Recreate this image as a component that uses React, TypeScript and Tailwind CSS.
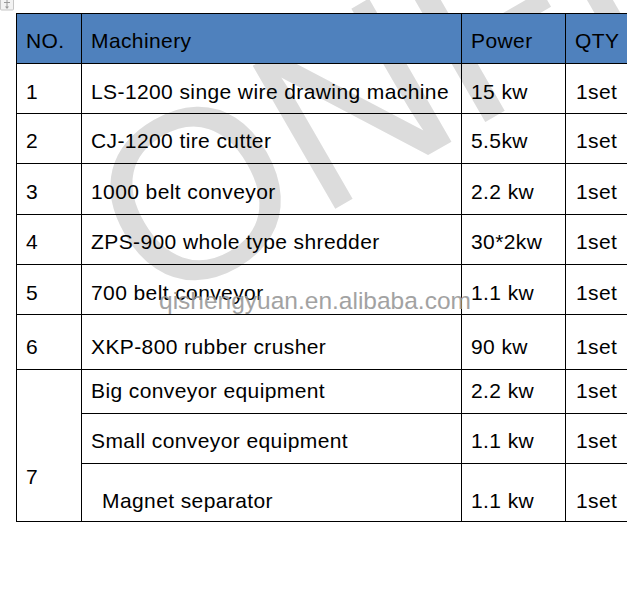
import React from "react";

type Row = {
    no: string;
    name: string;
    power: string;
    qty: string;
    h: string;
    pb: string;
};

const rows: Row[] = [
    { no: "1", name: "LS-1200 singe wire drawing machine", power: "15 kw", qty: "1set", h: "h-[50px]", pb: "pb-[9px]" },
    { no: "2", name: "CJ-1200 tire cutter", power: "5.5kw", qty: "1set", h: "h-[50px]", pb: "pb-[10px]" },
    { no: "3", name: "1000 belt conveyor", power: "2.2 kw", qty: "1set", h: "h-[51px]", pb: "pb-[10px]" },
    { no: "4", name: "ZPS-900 whole type shredder", power: "30*2kw", qty: "1set", h: "h-[50px]", pb: "pb-[10px]" },
    { no: "5", name: "700 belt conveyor", power: "1.1 kw", qty: "1set", h: "h-[50px]", pb: "pb-[9px]" },
    { no: "6", name: "XKP-800 rubber crusher", power: "90 kw", qty: "1set", h: "h-[55px]", pb: "pb-[10px]" },
];

const subRows = [
    { name: "Big conveyor equipment", power: "2.2 kw", h: "h-[44px]", pb: "pb-[10px]", indent: "pl-[9px]" },
    { name: "Small conveyor equipment", power: "1.1 kw", h: "h-[50px]", pb: "pb-[10px]", indent: "pl-[9px]" },
    { name: "Magnet separator", power: "1.1 kw", h: "h-[57px]", pb: "pb-[8px]", indent: "pl-[20px]" },
];

function MoveHandle() {
    return (
        <svg className="absolute left-0 top-0" width="15" height="11" viewBox="0 0 15 11">
            <rect x="0.5" y="-4" width="13" height="14" rx="1" fill="#f3f3f3" stroke="#c6c6c6" />
            <path d="M7 0v7M4 2.5h6" stroke="#9a9a9a" strokeWidth="1" />
            <path d="M5 6.5h4L7 9z" fill="#9a9a9a" />
        </svg>
    );
}

export default function App() {
    return (
        <div className="relative w-[627px] h-[601px] overflow-hidden bg-white font-['Liberation_Sans',Arial,sans-serif] text-[21px] leading-[24px] tracking-[0.4px] text-black">
            {/* watermark behind the table */}
            <div className="absolute left-[55px] top-[136px] origin-top-left -rotate-30 whitespace-nowrap text-[240px] leading-none tracking-normal text-[#dcdcdc]">
                ONFIDENTIAL
            </div>

            <MoveHandle />

            <div className="relative ml-[16px] mt-[13px] w-[613px] border-l border-t border-black">
                <div className="flex h-[50px] border-b border-black bg-[#4f81bd]">
                    <div className="flex w-[65px] shrink-0 items-end border-r border-black pl-[9px] pb-[10px]">NO.</div>
                    <div className="flex w-[380px] shrink-0 items-end border-r border-black pl-[9px] pb-[10px]">Machinery</div>
                    <div className="flex w-[104px] shrink-0 items-end border-r border-black pl-[9px] pb-[10px]">Power</div>
                    <div className="flex w-[63px] shrink-0 items-end border-r border-black pl-[9px] pb-[10px]">QTY</div>
                </div>

                {rows.map((r) => (
                    <div key={r.no} className={`flex border-b border-black ${r.h}`}>
                        <div className={`flex w-[65px] shrink-0 items-end border-r border-black pl-[9px] ${r.pb}`}>{r.no}</div>
                        <div className={`flex w-[380px] shrink-0 items-end border-r border-black pl-[9px] whitespace-nowrap ${r.pb}`}>{r.name}</div>
                        <div className={`flex w-[104px] shrink-0 items-end border-r border-black pl-[9px] ${r.pb}`}>{r.power}</div>
                        <div className={`flex w-[63px] shrink-0 items-end border-r border-black pl-[10px] ${r.pb}`}>{r.qty}</div>
                    </div>
                ))}

                <div className="flex border-b border-black">
                    <div className="flex w-[65px] shrink-0 items-end border-r border-black pl-[9px] pb-[32px]">7</div>
                    <div className="flex flex-col">
                        {subRows.map((s, i) => (
                            <div key={s.name} className={`flex ${s.h} ${i < subRows.length - 1 ? "border-b border-black" : ""}`}>
                                <div className={`flex w-[380px] shrink-0 items-end border-r border-black whitespace-nowrap ${s.indent} ${s.pb}`}>{s.name}</div>
                                <div className={`flex w-[104px] shrink-0 items-end border-r border-black pl-[9px] ${s.pb}`}>{s.power}</div>
                                <div className={`flex w-[63px] shrink-0 items-end border-r border-black pl-[10px] ${s.pb}`}>1set</div>
                            </div>
                        ))}
                    </div>
                </div>
            </div>

            <span className="absolute left-[159px] top-[289px] whitespace-nowrap text-[24.5px] leading-none tracking-normal text-[#999999] opacity-90">
                qishengyuan.en.alibaba.com
            </span>
        </div>
    );
}
